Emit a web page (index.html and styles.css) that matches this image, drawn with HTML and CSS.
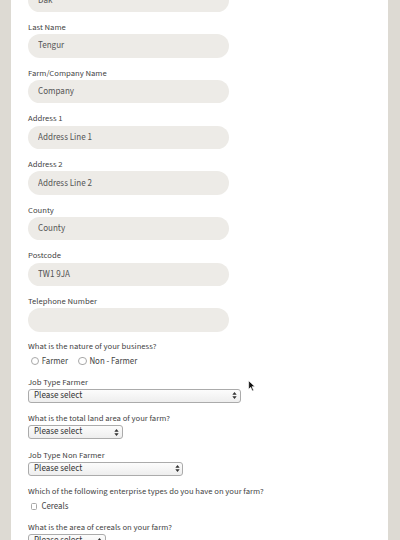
FILE: index.html
```html
<!DOCTYPE html>
<html>
<head>
<meta charset="utf-8">
<link rel="stylesheet" href="styles.css">
</head>
<body>
<div class="panel">
  <form class="form">
    <div class="field first"><input class="pill" value="Dak"></div>
    <div class="field"><label class="lbl">Last Name</label><input class="pill" value="Tengur"></div>
    <div class="field"><label class="lbl">Farm/Company Name</label><input class="pill" placeholder="Company"></div>
    <div class="field"><label class="lbl">Address 1</label><input class="pill" placeholder="Address Line 1"></div>
    <div class="field"><label class="lbl">Address 2</label><input class="pill" placeholder="Address Line 2"></div>
    <div class="field"><label class="lbl">County</label><input class="pill" placeholder="County"></div>
    <div class="field"><label class="lbl">Postcode</label><input class="pill" value="TW1 9JA"></div>
    <div class="field"><label class="lbl">Telephone Number</label><input class="pill" value=""></div>

    <div class="q q-first q-opts">
      <div class="lbl">What is the nature of your business?</div>
      <div class="opts">
        <label class="opt"><input type="radio" name="nb" class="radio">Farmer</label>
        <label class="opt"><input type="radio" name="nb" class="radio">Non - Farmer</label>
      </div>
    </div>

    <div class="q">
      <div class="lbl">Job Type Farmer</div>
      <span class="sel w1"><select><option>Please select</option></select><svg class="arr" viewBox="0 0 6 10" width="5" height="9"><path d="M3 0.8 L5.6 4 H0.4 Z M3 9.2 L5.6 6 H0.4 Z" fill="#333"/></svg></span>
    </div>

    <div class="q">
      <div class="lbl">What is the total land area of your farm?</div>
      <span class="sel w2"><select><option>Please select</option></select><svg class="arr" viewBox="0 0 6 10" width="5" height="9"><path d="M3 0.8 L5.6 4 H0.4 Z M3 9.2 L5.6 6 H0.4 Z" fill="#333"/></svg></span>
    </div>

    <div class="q">
      <div class="lbl">Job Type Non Farmer</div>
      <span class="sel w3"><select><option>Please select</option></select><svg class="arr" viewBox="0 0 6 10" width="5" height="9"><path d="M3 0.8 L5.6 4 H0.4 Z M3 9.2 L5.6 6 H0.4 Z" fill="#333"/></svg></span>
    </div>

    <div class="q q-opts">
      <div class="lbl">Which of the following enterprise types do you have on your farm?</div>
      <div class="opts">
        <label class="opt"><input type="checkbox" class="check">Cereals</label>
      </div>
    </div>

    <div class="q">
      <div class="lbl">What is the area of cereals on your farm?</div>
      <span class="sel w4"><select><option>Please select</option></select><svg class="arr" viewBox="0 0 6 10" width="5" height="9"><path d="M3 0.8 L5.6 4 H0.4 Z M3 9.2 L5.6 6 H0.4 Z" fill="#333"/></svg></span>
    </div>
  </form>
</div>
<svg class="cursor" viewBox="0 0 12 18" width="8" height="12"><path d="M1 1 L1 14 L4 11 L6.5 16.5 L8.5 15.5 L6 10 L10.5 10 Z" fill="#111" stroke="#fff" stroke-width="1"/></svg>
</body>
</html>
```

FILE: styles.css
```css
html, body {
  margin: 0;
  padding: 0;
  height: 540px;
  overflow: hidden;
  background: #dddad3;
}
body {
  font-family: "Source Sans 3", "Source Sans Pro", "Open Sans", sans-serif;
  font-weight: 400;
  color: #3a3a3a;
  position: relative;
}
.panel {
  margin-left: 11px;
  width: 377px;
  height: 560px;
  background: #fff;
  box-sizing: border-box;
  padding-left: 17px;
}
.form {
  display: flex;
  flex-direction: column;
  margin-top: -11.4px;
}
.field {
  display: flex;
  flex-direction: column;
  margin-bottom: 9px;
}
.lbl {
  font-size: 8.6px;
  font-weight: 400;
  line-height: 12px;
  color: #3f3f3f;
  white-space: nowrap;
}
.field .lbl { margin-bottom: 1.3px; }
.pill {
  width: 201px;
  height: 23.4px;
  box-sizing: border-box;
  border: none;
  outline: none;
  border-radius: 12px;
  background: #edebe7;
  padding: 0 10px;
  margin: 0;
  font-family: inherit;
  font-weight: 400;
  font-size: 9px;
  color: #555;
}
.pill::placeholder { color: #555; opacity: 1; }
.q {
  display: flex;
  flex-direction: column;
  align-items: flex-start;
  margin-bottom: 9.2px;
}
.q-first { margin-top: -1px; }
.q-opts { margin-bottom: 7.5px; }
.q .lbl { margin-bottom: 1.3px; }
.opts {
  display: flex;
  height: 14px;
  align-items: center;
  padding-left: 2.7px;
  gap: 10.3px;
  margin-top: 1px;
}
.opt {
  display: flex;
  align-items: center;
  font-size: 8.8px;
  font-weight: 400;
  color: #444;
  gap: 2.5px;
}
.radio, .check {
  appearance: none;
  -webkit-appearance: none;
  margin: 0;
  width: 8.6px;
  height: 8.6px;
  border: 1px solid #a8a8a8;
  background: #fff;
  box-sizing: border-box;
}
.radio { border-radius: 50%; }
.check {
  border-radius: 1.5px;
  width: 6.8px;
  height: 6.8px;
  margin-right: 1.5px;
}
.sel {
  position: relative;
  display: inline-block;
  height: 14px;
}
.sel select {
  appearance: none;
  -webkit-appearance: none;
  width: 100%;
  height: 14px;
  box-sizing: border-box;
  border: 1px solid #ababab;
  border-radius: 3px;
  background: linear-gradient(#fcfcfc, #eeeeee);
  font-family: inherit;
  font-weight: 400;
  font-size: 9px;
  line-height: 12px;
  color: #333;
  padding: 0 0 0 5px;
  margin: 0;
  display: block;
}
.sel .arr {
  position: absolute;
  right: 3.5px;
  top: 2.5px;
}
.w1 { width: 212.5px; }
.w2 { width: 94.5px; }
.w3 { width: 155px; }
.w4 { width: 77.7px; }
.cursor {
  position: absolute;
  left: 248px;
  top: 380px;
}
```
